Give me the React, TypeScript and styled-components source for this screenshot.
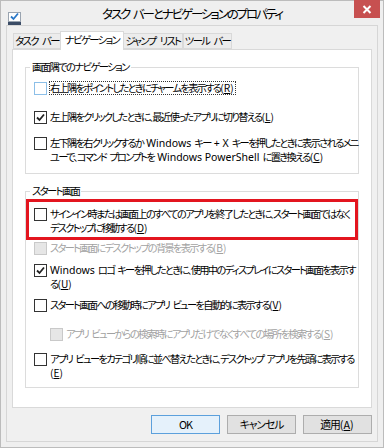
import styled, { createGlobalStyle } from 'styled-components'

const GlobalStyle = createGlobalStyle`
  html, body {
    margin: 0;
    padding: 0;
    background: #ffffff;
  }
  body {
    font-family: "Meiryo UI", "Noto Sans CJK JP", sans-serif;
    font-feature-settings: "palt";
    color: #000;
  }
`

const Window = styled.div`
  width: 384px;
  height: 448px;
  box-sizing: border-box;
  border: 1px solid #bcbcbc;
  background: #efefef;
  display: flex;
  flex-direction: column;
`

const TitleBar = styled.div`
  height: 24px;
  display: grid;
  grid-template-columns: 1fr auto 1fr;
  align-items: start;
`

const TitleIcon = styled.div`
  padding: 5px 0 0 7px;
  height: 13px;
`

const TitleText = styled.div`
  font-size: 12.5px;
  letter-spacing: -2.1px;
  word-spacing: 3px;
  line-height: 14px;
  padding-top: 6px;
  white-space: nowrap;
`

const CloseButton = styled.div`
  justify-self: end;
  margin-right: 3px;
  margin-top: -1px;
  width: 26px;
  height: 18px;
  background: #c75050;
  display: flex;
  align-items: center;
  justify-content: center;
`

const Client = styled.div`
  flex: 1;
  margin: 0 5px 5px 5px;
  border: 1px solid #d6d6d6;
  background: #f0f0f0;
  padding: 5px 5px 7px 5px;
  display: flex;
  flex-direction: column;
`

const TabStrip = styled.div`
  height: 18px;
  display: flex;
  align-items: flex-end;
  padding-left: 1px;
  position: relative;
  z-index: 1;
`

const Tab = styled.div<{ $active?: boolean; $w: number }>`
  box-sizing: border-box;
  width: ${(p) => p.$w}px;
  height: ${(p) => (p.$active ? '19px' : '16px')};
  margin-bottom: ${(p) => (p.$active ? '-1px' : '0')};
  margin-left: ${(p) => (p.$active ? '-1px' : '0')};
  margin-right: ${(p) => (p.$active ? '-1px' : '0')};
  padding-bottom: ${(p) => (p.$active ? '2px' : '0')};
  border: 1px solid #d9d9d9;
  border-bottom: ${(p) => (p.$active ? 'none' : '1px solid #d9d9d9')};
  background: ${(p) => (p.$active ? '#ffffff' : '#ececec')};
  font-size: 10.3px;
  letter-spacing: -1.6px;
  word-spacing: 3.5px;
  line-height: 14px;
  display: flex;
  align-items: center;
  justify-content: center;
  white-space: nowrap;
  position: relative;
  z-index: ${(p) => (p.$active ? 2 : 1)};
`

const Panel = styled.div`
  height: 359px;
  box-sizing: border-box;
  border: 1px solid #d9d9d9;
  background: #ffffff;
  padding-top: 10px;
`

const Group = styled.fieldset<{ $top?: number; $bottom?: number }>`
  margin: ${(p) => p.$top ?? 0}px 12px 0;
  padding: 0 8px ${(p) => p.$bottom ?? 8}px;
  border: 1px solid #dcdcdc;
  min-width: 0;
`

const Legend = styled.legend`
  font-size: 10.3px;
  letter-spacing: -1.6px;
  line-height: 14px;
  padding: 0 2px;
  margin-left: -4px;
  white-space: nowrap;
`

const Row = styled.label<{ $gap?: number; $indent?: number; $disabled?: boolean }>`
  display: flex;
  align-items: flex-start;
  gap: 2px;
  margin-top: ${(p) => p.$gap ?? 0}px;
  margin-left: ${(p) => p.$indent ?? 0}px;
  font-size: 10.2px;
  letter-spacing: -1.65px;
  word-spacing: 2.5px;
  line-height: 14px;
  white-space: nowrap;
  color: ${(p) => (p.$disabled ? '#a2a2a2' : '#000')};
`

const Box = styled.span<{ $state: 'off' | 'on' | 'hot' | 'disabled' }>`
  flex: none;
  width: 11px;
  height: 11px;
  margin-top: 1px;
  border: 1px solid
    ${(p) =>
      p.$state === 'hot' ? '#8cbfe8' : p.$state === 'disabled' ? '#c9c9c9' : '#333333'};
  background: ${(p) => (p.$state === 'disabled' ? '#e6e6e6' : '#ffffff')};
  display: flex;
  align-items: center;
  justify-content: center;
`

const Text = styled.span<{ $focus?: boolean }>`
  padding: 0 1px;
  outline: ${(p) => (p.$focus ? '1px dotted #333' : 'none')};
  outline-offset: -1px;
`

// latin words keep normal spacing
const En = styled.span`
  font-family: "Noto Sans", "Noto Sans CJK JP", sans-serif;
  font-size: 10.5px;
  letter-spacing: 0;
  word-spacing: 0;
`

const Mn = styled.span`
  letter-spacing: 0;
  margin-right: 1px;

  u {
    text-underline-offset: 1px;
  }
`

const Highlight = styled.div`
  margin: 1px -8px 0;
  border: 3px solid #e3151f;
  padding: 5px 0 2px 5px;
`

const ButtonRow = styled.div`
  margin-top: 7px;
  display: flex;
  justify-content: flex-end;
  gap: 7px;
`

const Button = styled.div<{ $default?: boolean }>`
  width: 69px;
  height: 19px;
  box-sizing: border-box;
  border: 1px solid ${(p) => (p.$default ? '#5ca0dc' : '#adadad')};
  background: ${(p) => (p.$default ? '#e5f1fb' : '#e1e1e1')};
  font-size: 10.8px;
  letter-spacing: -1px;
  line-height: 17px;
  text-align: center;
`

function Key({ k }: { k: string }) {
  return (
    <Mn>
      (<u>{k}</u>)
    </Mn>
  )
}

type CheckProps = {
  state: 'off' | 'on' | 'hot' | 'disabled'
  gap?: number
  indent?: number
  focus?: boolean
  children: React.ReactNode
}

function Check({ state, gap, indent, focus, children }: CheckProps) {
  return (
    <Row $gap={gap} $indent={indent} $disabled={state === 'disabled'}>
      <Box $state={state}>
        {state === 'on' && (
          <svg width="9" height="9" viewBox="0 0 9 9">
            <path d="M1 4.5 L3.5 7 L8 1.5" fill="none" stroke="#222" strokeWidth="1.8" />
          </svg>
        )}
      </Box>
      <Text $focus={focus}>{children}</Text>
    </Row>
  )
}

export default function App() {
  return (
    <>
      <GlobalStyle />
      <Window>
        <TitleBar>
          <TitleIcon>
            <svg width="13" height="13" viewBox="0 0 13 13">
              <rect x="0.5" y="0.5" width="12" height="9" fill="#fff" stroke="#9aa4b0" />
              <path d="M3 4.5 L5.5 7 L10 1.5" fill="none" stroke="#2a78c8" strokeWidth="1.8" />
              <rect x="0" y="10" width="13" height="3" fill="#3b4c66" />
            </svg>
          </TitleIcon>
          <TitleText>タスク バーとナビゲーションのプロパティ</TitleText>
          <CloseButton>
            <svg width="10" height="9" viewBox="0 0 10 9">
              <path d="M1.5 1 L8.5 8 M8.5 1 L1.5 8" stroke="#fff" strokeWidth="2" />
            </svg>
          </CloseButton>
        </TitleBar>

        <Client>
          <TabStrip>
            <Tab $w={48}>タスク バー</Tab>
            <Tab $active $w={64}>ナビゲーション</Tab>
            <Tab $w={60}>ジャンプ リスト</Tab>
            <Tab $w={49}>ツール バー</Tab>
          </TabStrip>

          <Panel>
            {/* 画面隅 */}
            <Group $bottom={9}>
              <Legend>画面隅でのナビゲーション</Legend>
              <Check state="hot" gap={7} focus>
                右上隅をポイントしたときにチャームを表示する<Key k="R" />
              </Check>
              <Check state="on" gap={15}>
                左上隅をクリックしたときに、最近使ったアプリに切り替える<Key k="L" />
              </Check>
              <Check state="off" gap={12}>
                左下隅を右クリックするか <En>Windows</En> キー <En>+ X</En> キーを押したときに表示されるメニ
                <br />
                ユーで、コマンド プロンプトを <En>Windows PowerShell</En> に置き換える<Key k="C" />
              </Check>
            </Group>

            {/* スタート画面 */}
            <Group $top={10} $bottom={7}>
              <Legend>スタート画面</Legend>
              <Highlight>
                <Check state="off">
                  サインイン時または画面上のすべてのアプリを終了したときに、スタート画面ではなく
                  <br />
                  デスクトップに移動する<Key k="D" />
                </Check>
              </Highlight>
              <Check state="disabled" gap={1}>
                スタート画面にデスクトップの背景を表示する<Key k="B" />
              </Check>
              <Check state="on" gap={8}>
                <En>Windows</En> ロゴ キーを押したときに、使用中のディスプレイにスタート画面を表示す
                <br />
                る<Key k="U" />
              </Check>
              <Check state="off" gap={7}>
                スタート画面への移動時にアプリ ビューを自動的に表示する<Key k="V" />
              </Check>
              <Check state="disabled" gap={15} indent={16}>
                アプリ ビューからの検索時にアプリだけでなくすべての場所を検索する<Key k="S" />
              </Check>
              <Check state="off" gap={11}>
                アプリ ビューをカテゴリ順に並べ替えたときに、デスクトップ アプリを先頭に表示する
                <br />
                <Key k="E" />
              </Check>
            </Group>
          </Panel>

          <ButtonRow>
            <Button $default>OK</Button>
            <Button>キャンセル</Button>
            <Button>
              適用<Key k="A" />
            </Button>
          </ButtonRow>
        </Client>
      </Window>
    </>
  )
}
